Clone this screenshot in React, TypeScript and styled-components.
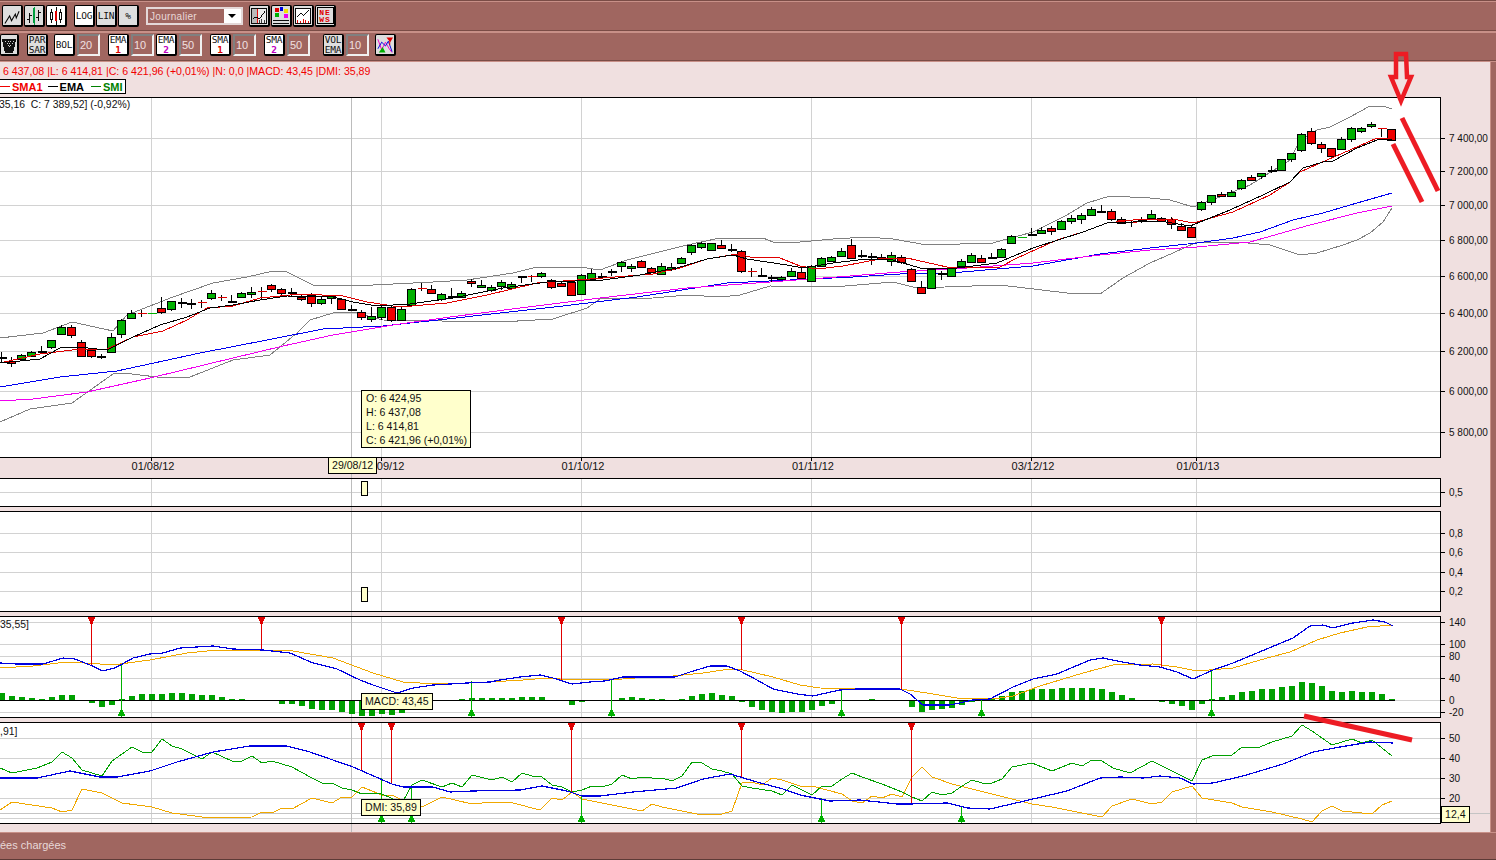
import type { ReactNode } from 'react';
import styled, { createGlobalStyle } from 'styled-components';

type Kind = 'g' | 'r' | 'b' | 'x' | 't';
type Row = [number, number, number, number, Kind];
type Pt = [number, number];

// values are read from 3x crops of the chart, so each block has its own origin
const block = (startX: number, baseY: number, rows: Row[]) =>
  rows.map((r, i) => ({
    x: startX + i * 10,
    top: Math.round(baseY + r[0] / 3) + 0.5,
    bottom: Math.round(baseY + r[1] / 3) + 0.5,
    hi: Math.round(baseY + r[2] / 3),
    lo: Math.round(baseY + r[3] / 3),
    kind: r[4],
  }));

const CANDLES = [
  ...block(1.5, 270, [
    [260, 260, 245, 275, 'b'], [272, 280, 262, 292, 'r'], [256, 268, 252, 272, 'g'], [247, 257, 243, 260, 'g'],
    [243, 243, 228, 248, 'b'], [209, 230, 209, 236, 'g'], [172, 193, 165, 195, 'g'], [170, 196, 165, 203, 'r'],
    [217, 257, 210, 262, 'r'], [240, 259, 237, 265, 'r'], [257, 262, 253, 266, 'g'], [200, 247, 190, 250, 'g'],
    [151, 193, 148, 205, 'g'], [130, 145, 120, 148, 'g'], [130, 130, 120, 140, 'x'], [130, 130, 130, 130, 't'],
    [113, 127, 82, 132, 'r'], [94, 118, 92, 122, 'g'], [95, 95, 83, 115, 'b'], [98, 103, 87, 117, 'g'],
    [97, 97, 90, 115, 'x'], [70, 85, 60, 90, 'g'], [82, 82, 75, 92, 'x'], [92, 92, 75, 100, 'b'],
    [70, 82, 65, 85, 'g'], [67, 73, 52, 85, 'g'], [63, 63, 50, 90, 'x'], [44, 58, 42, 65, 'r'],
    [58, 70, 55, 78, 'r'], [66, 66, 55, 80, 'b'], [82, 88, 75, 92, 'r'], [74, 100, 68, 110, 'r'],
    [87, 100, 82, 105, 'g'], [79, 84, 76, 102, 'g'], [88, 118, 85, 120, 'r'], [117, 117, 105, 120, 'b'],
    [127, 142, 120, 150, 'r'], [137, 148, 110, 155, 'g'], [110, 142, 105, 150, 'g'], [110, 150, 108, 155, 'r'],
    [116, 150, 110, 152, 'g'], [58, 105, 55, 108, 'g'],
  ]),
  ...block(421.5, 200, [
    [263, 263, 250, 272, 'x'], [266, 280, 255, 282, 'r'], [283, 298, 280, 302, 'g'], [288, 288, 265, 295, 'b'],
    [278, 290, 273, 295, 'g'], [244, 250, 238, 260, 'r'], [256, 262, 240, 265, 'g'], [262, 269, 255, 275, 'g'],
    [245, 257, 240, 270, 'g'], [253, 264, 247, 268, 'g'], [227, 227, 227, 248, 'b'], [229, 229, 225, 245, 'x'],
    [220, 229, 215, 235, 'g'], [239, 262, 237, 268, 'r'], [248, 259, 243, 262, 'r'], [245, 286, 243, 288, 'r'],
    [224, 283, 222, 284, 'g'], [220, 238, 208, 240, 'g'], [227, 227, 220, 235, 'b'], [212, 212, 208, 228, 'b'],
    [187, 199, 183, 215, 'g'], [199, 205, 193, 215, 'g'], [184, 202, 180, 204, 'r'], [203, 215, 200, 218, 'r'],
    [199, 223, 190, 225, 'g'], [200, 206, 190, 213, 'g'], [173, 190, 170, 193, 'g'], [134, 157, 132, 165, 'g'],
    [128, 141, 126, 146, 'g'], [130, 149, 128, 152, 'g'], [134, 144, 120, 148, 'r'], [147, 147, 132, 155, 'b'],
    [152, 214, 150, 220, 'r'], [214, 214, 205, 230, 'x'], [225, 225, 205, 228, 'b'], [231, 231, 225, 247, 'b'],
    [231, 236, 228, 240, 'g'], [212, 229, 205, 230, 'g'],
  ]),
  ...block(801.5, 180, [
    [275, 293, 265, 295, 'r'], [257, 304, 255, 305, 'g'], [233, 259, 230, 262, 'g'], [232, 242, 228, 246, 'g'],
    [212, 229, 205, 232, 'g'], [194, 234, 177, 236, 'r'], [225, 225, 210, 233, 'b'], [228, 228, 218, 254, 'b'],
    [231, 238, 222, 240, 'r'], [224, 244, 215, 258, 'g'], [230, 247, 226, 252, 'r'], [268, 304, 265, 306, 'r'],
    [322, 340, 303, 341, 'r'], [268, 323, 265, 324, 'g'], [279, 279, 272, 299, 'b'], [265, 287, 262, 290, 'g'],
    [244, 258, 238, 262, 'g'], [226, 245, 220, 247, 'g'], [233, 245, 226, 247, 'r'], [231, 231, 220, 237, 'b'],
    [206, 232, 204, 234, 'g'], [167, 188, 165, 191, 'g'], [170, 170, 155, 172, 't'], [161, 161, 143, 165, 'b'],
    [151, 160, 142, 163, 'g'], [143, 154, 138, 164, 'r'], [122, 148, 120, 150, 'g'], [115, 124, 105, 132, 'g'],
    [105, 118, 100, 132, 'g'], [88, 104, 82, 106, 'g'], [92, 97, 75, 100, 'r'], [92, 118, 88, 122, 'r'],
    [116, 128, 112, 130, 'r'], [125, 125, 120, 140, 'x'], [120, 120, 112, 128, 'b'], [103, 113, 90, 116, 'g'],
    [115, 122, 110, 126, 'r'],
  ]),
  ...block(1171.5, 40, [
    [537, 553, 532, 567, 'r'], [559, 569, 550, 571, 'r'], [562, 590, 555, 591, 'r'], [485, 508, 482, 512, 'g'],
    [466, 487, 464, 494, 'g'], [463, 469, 457, 471, 'r'], [457, 469, 450, 471, 'g'], [419, 445, 417, 450, 'g'],
    [412, 421, 405, 423, 'r'], [400, 407, 398, 416, 'g'], [390, 390, 378, 400, 'b'], [358, 391, 356, 394, 'g'],
    [340, 358, 338, 365, 'g'], [281, 331, 279, 335, 'g'], [272, 310, 265, 314, 'r'], [313, 325, 306, 338, 'r'],
    [325, 349, 323, 352, 'r'], [298, 328, 292, 330, 'g'], [265, 298, 262, 305, 'g'], [265, 274, 262, 278, 'g'],
    [253, 259, 247, 265, 'g'], [265, 265, 265, 290, 'x'], [268, 301, 266, 302, 'r'],
  ]),
];

const BOLL_UP: Pt[] = [[0, 338], [43, 333], [72, 322], [113, 331], [127, 315], [173, 297], [213, 283], [247, 277], [273, 271], [287, 272], [313, 285], [353, 286], [433, 282], [467, 280], [513, 273], [537, 267], [580, 267], [600, 270], [627, 260], [687, 245], [720, 238], [763, 238], [773, 242], [800, 242], [833, 239], [867, 237], [893, 239], [927, 245], [993, 243], [1007, 239], [1033, 232], [1067, 215], [1087, 203], [1110, 196], [1150, 198], [1170, 200], [1193, 207], [1217, 198], [1250, 185], [1290, 160], [1300, 140], [1317, 130], [1330, 127], [1350, 117], [1370, 106], [1383, 106], [1392, 109]];
const BOLL_DOWN: Pt[] = [[0, 422], [30, 409], [72, 403], [113, 374], [123, 373], [157, 377], [190, 377], [233, 360], [270, 355], [297, 333], [310, 320], [333, 313], [353, 312], [383, 320], [500, 322], [553, 319], [587, 308], [600, 299], [653, 298], [687, 295], [720, 297], [740, 295], [770, 286], [833, 287], [893, 282], [917, 288], [1000, 285], [1067, 293], [1100, 294], [1123, 278], [1150, 263], [1173, 253], [1197, 242], [1237, 242], [1270, 245], [1300, 255], [1317, 253], [1343, 245], [1357, 240], [1370, 233], [1383, 222], [1392, 208]];
const BLUE_LINE: Pt[] = [[0, 387], [60, 377], [117, 371], [200, 353], [267, 340], [323, 329], [383, 326], [447, 319], [500, 313], [563, 306], [637, 297], [727, 283], [853, 277], [900, 274], [950, 273], [1033, 266], [1100, 254], [1150, 248], [1197, 243], [1233, 238], [1260, 232], [1293, 220], [1323, 213], [1357, 203], [1392, 193]];
const PINK_LINE: Pt[] = [[0, 401], [33, 399], [87, 392], [150, 378], [233, 358], [283, 346], [333, 335], [393, 325], [450, 317], [520, 308], [600, 298], [687, 288], [770, 282], [850, 276], [900, 272], [967, 268], [1033, 263], [1100, 255], [1150, 250], [1197, 247], [1250, 242], [1310, 225], [1357, 213], [1392, 206]];
const EMA_LINE: Pt[] = [[0, 363], [40, 359], [60, 348], [78, 347], [107, 350], [133, 337], [160, 325], [187, 317], [210, 308], [233, 305], [260, 300], [287, 296], [333, 297], [353, 302], [377, 306], [410, 304], [453, 298], [503, 288], [547, 282], [603, 280], [640, 275], [677, 268], [707, 259], [733, 255], [747, 259], [787, 265], [803, 268], [833, 263], [867, 259], [893, 260], [920, 268], [957, 268], [997, 263], [1033, 248], [1083, 232], [1107, 223], [1160, 221], [1190, 226], [1230, 210], [1263, 195], [1290, 182], [1303, 168], [1323, 162], [1333, 161], [1357, 148], [1377, 140], [1392, 139]];
const SMA_LINE: Pt[] = [[0, 363], [40, 354], [80, 349], [107, 349], [133, 337], [163, 331], [187, 320], [207, 308], [233, 306], [260, 298], [300, 294], [343, 296], [367, 302], [400, 307], [447, 303], [487, 295], [537, 283], [603, 278], [653, 274], [680, 268], [707, 259], [737, 254], [750, 257], [780, 258], [800, 266], [817, 269], [843, 266], [880, 259], [907, 258], [947, 267], [1000, 267], [1017, 258], [1057, 240], [1083, 232], [1107, 223], [1133, 220], [1173, 219], [1193, 223], [1233, 212], [1270, 195], [1290, 182], [1300, 172], [1327, 160], [1350, 150], [1377, 138], [1392, 138]];

const MACD_BLUE: Pt[] = [[0, 663], [17, 664], [43, 664], [63, 658], [75, 659], [90, 665], [103, 671], [115, 668], [133, 658], [150, 654], [163, 653], [180, 648], [213, 646], [233, 649], [263, 650], [290, 653], [313, 663], [337, 669], [360, 680], [373, 685], [397, 693], [413, 688], [433, 685], [467, 683], [490, 682], [500, 680], [520, 677], [540, 675], [553, 678], [572, 684], [590, 682], [605, 681], [623, 677], [647, 677], [675, 677], [690, 672], [710, 666], [727, 666], [740, 671], [757, 680], [773, 689], [797, 694], [813, 696], [840, 690], [857, 689], [900, 689], [910, 694], [923, 705], [950, 705], [973, 700], [990, 699], [1013, 687], [1033, 679], [1057, 674], [1090, 660], [1103, 658], [1117, 661], [1140, 665], [1160, 667], [1177, 672], [1193, 679], [1213, 670], [1233, 663], [1257, 653], [1293, 638], [1310, 626], [1323, 625], [1333, 628], [1353, 623], [1373, 620], [1385, 622], [1393, 626]];
const MACD_ORANGE: Pt[] = [[0, 668], [33, 666], [67, 662], [100, 664], [120, 664], [150, 660], [187, 653], [217, 650], [267, 650], [293, 651], [333, 658], [373, 673], [403, 682], [420, 683], [467, 683], [490, 682], [523, 680], [547, 678], [573, 680], [623, 679], [647, 677], [673, 676], [703, 673], [730, 669], [743, 670], [773, 677], [800, 685], [820, 688], [857, 689], [900, 689], [927, 693], [957, 698], [993, 699], [1013, 696], [1040, 686], [1083, 673], [1113, 665], [1153, 664], [1177, 667], [1197, 671], [1233, 668], [1267, 658], [1290, 652], [1317, 640], [1340, 633], [1367, 627], [1393, 625]];
const MACD_HIST = [7, 4, 3, 2, 1, 3, 5, 5, 0, -2, -6, -4, 1, 4, 6, 6, 6, 7, 7, 6, 5, 5, 3, 1, 1, 0, 0, 0, -3, -3, -5, -8, -9, -9, -11, -13, -15, -15, -13, -14, -12, 0, 0, 0, 0, 0, 1, 2, 2, 2, 2, 2, 3, 3, 3, 0, 0, -4, -1, 0, 0, 0, 2, 3, 2, 1, 1, 0, 1, 4, 6, 7, 5, 4, -1, -6, -9, -11, -12, -11, -11, -9, -5, -3, 0, 0, 0, 1, 0, 0, 0, -6, -11, -9, -8, -7, -4, -1, 0, 1, 4, 8, 9, 11, 11, 11, 12, 12, 12, 12, 11, 8, 5, 2, 0, 0, -1, -3, -5, -9, -3, 1, 3, 5, 8, 9, 11, 11, 13, 14, 18, 17, 14, 9, 8, 9, 8, 8, 6, 1];

const DMI_BLUE: Pt[] = [[0, 778], [37, 778], [70, 771], [100, 777], [117, 777], [150, 771], [177, 762], [213, 752], [250, 746], [287, 746], [310, 752], [353, 767], [392, 784], [403, 787], [433, 787], [450, 792], [473, 791], [520, 790], [542, 786], [567, 791], [582, 796], [600, 796], [633, 792], [677, 788], [703, 779], [730, 774], [757, 782], [783, 789], [800, 795], [830, 801], [860, 800], [897, 804], [910, 804], [947, 803], [967, 808], [990, 809], [1033, 799], [1067, 791], [1100, 778], [1120, 777], [1143, 778], [1160, 776], [1180, 778], [1193, 784], [1213, 783], [1243, 776], [1283, 764], [1313, 752], [1340, 747], [1370, 742], [1393, 743]];
const DMI_GREEN: Pt[] = [[0, 768], [12, 773], [37, 768], [52, 762], [62, 752], [72, 758], [82, 770], [102, 776], [112, 761], [132, 747], [142, 752], [152, 752], [162, 739], [172, 746], [182, 749], [202, 759], [212, 752], [232, 761], [242, 761], [252, 756], [262, 763], [272, 761], [292, 767], [312, 778], [322, 783], [332, 783], [342, 788], [352, 790], [362, 794], [372, 793], [382, 794], [402, 803], [412, 785], [422, 780], [442, 787], [452, 783], [462, 787], [472, 775], [492, 780], [502, 777], [512, 782], [522, 773], [532, 776], [542, 777], [552, 785], [562, 787], [572, 792], [582, 790], [592, 786], [602, 787], [612, 784], [622, 775], [632, 779], [642, 777], [652, 778], [662, 778], [672, 781], [682, 776], [692, 762], [702, 763], [712, 769], [722, 771], [732, 774], [742, 786], [752, 788], [772, 791], [782, 795], [792, 785], [800, 789], [812, 795], [822, 786], [832, 786], [842, 779], [852, 773], [862, 777], [882, 784], [902, 792], [912, 797], [922, 801], [932, 792], [942, 795], [952, 793], [962, 786], [972, 780], [982, 783], [992, 783], [1002, 779], [1012, 767], [1032, 763], [1052, 771], [1072, 763], [1082, 766], [1092, 760], [1102, 761], [1113, 768], [1130, 773], [1152, 761], [1192, 781], [1202, 760], [1212, 756], [1232, 755], [1242, 747], [1260, 747], [1272, 742], [1292, 736], [1302, 725], [1312, 731], [1332, 745], [1352, 739], [1362, 743], [1372, 740], [1392, 756]];
const DMI_ORANGE: Pt[] = [[0, 810], [12, 802], [32, 805], [52, 808], [62, 812], [72, 810], [82, 789], [102, 793], [122, 803], [152, 807], [172, 813], [202, 817], [212, 818], [252, 817], [262, 812], [272, 813], [282, 808], [292, 809], [312, 798], [332, 803], [342, 797], [352, 797], [362, 787], [382, 795], [392, 795], [402, 800], [422, 807], [442, 797], [472, 804], [492, 802], [513, 803], [540, 810], [552, 798], [562, 800], [572, 792], [582, 799], [602, 803], [642, 811], [652, 804], [662, 807], [692, 813], [702, 815], [722, 814], [732, 811], [742, 783], [752, 782], [762, 785], [772, 778], [782, 780], [800, 786], [812, 786], [842, 794], [852, 801], [862, 803], [872, 796], [882, 798], [892, 794], [902, 797], [912, 777], [922, 767], [932, 777], [952, 784], [992, 794], [1032, 804], [1052, 807], [1082, 813], [1102, 817], [1112, 806], [1132, 799], [1152, 804], [1162, 802], [1172, 792], [1192, 786], [1202, 798], [1232, 803], [1242, 807], [1272, 812], [1302, 819], [1312, 822], [1322, 811], [1332, 806], [1342, 811], [1372, 814], [1382, 805], [1392, 801]];

const VERTICALS = [151.5, 351.5, 381.5, 581.5, 811.5, 1031.5, 1196.5];
const DATES: [number, string][] = [[153, '01/08/12'], [383, '03/09/12'], [583, '01/10/12'], [813, '01/11/12'], [1033, '03/12/12'], [1198, '01/01/13']];
const MAIN_AXIS: [number, string][] = [[138, '7 400,00'], [171, '7 200,00'], [205, '7 000,00'], [240, '6 800,00'], [276, '6 600,00'], [313, '6 400,00'], [351, '6 200,00'], [391, '6 000,00'], [432, '5 800,00']];
const VOL_AXIS: [number, string][] = [[492, '0,5']];
const OSC_AXIS: [number, string][] = [[533, '0,8'], [552, '0,6'], [572, '0,4'], [591, '0,2']];
const MACD_AXIS: [number, string][] = [[622, '140'], [644, '100'], [656, '80'], [678, '40'], [700, '0'], [712, '-20']];
const DMI_AXIS: [number, string][] = [[738, '50'], [758, '40'], [778, '30'], [798, '20'], [818, '10']];

const MACD_SELL: Pt[] = [[91.5, 665], [261.5, 650], [561.5, 680], [741.5, 670], [901.5, 689], [1161.5, 667]];
const MACD_BUY: Pt[] = [[121.5, 665], [471.5, 681], [611.5, 679], [841.5, 689], [981.5, 699], [1211.5, 670]];
const DMI_SELL: Pt[] = [[361.5, 771], [391.5, 784], [571.5, 792], [741.5, 777], [911.5, 804]];
const DMI_BUY: Pt[] = [[381.5, 778], [411.5, 785], [581.5, 796], [821.5, 798], [961.5, 806]];

const points = (pts: Pt[]) => pts.map(p => p.join(',')).join(' ');

const Series = ({ pts, color, width = 1 }: { pts: Pt[]; color: string; width?: number }) => (
  <polyline points={points(pts)} fill="none" stroke={color} strokeWidth={width} />
);

const Candle = ({ c }: { c: (typeof CANDLES)[number] }) => {
  const wick = <line x1={c.x} x2={c.x} y1={c.hi} y2={c.lo} stroke="#000" />;
  if (c.kind === 'x' || c.kind === 't') {
    return (
      <g>
        {c.kind === 'x' && wick}
        <line x1={c.x - 4} x2={c.x + 5} y1={c.top} y2={c.top} stroke={c.kind === 'x' ? '#e00000' : '#00b000'} />
      </g>
    );
  }
  if (c.kind === 'b') {
    return (
      <g>
        {wick}
        <rect x={c.x - 4} y={c.top - 1} width={9} height={2} fill="#000" />
      </g>
    );
  }
  return (
    <g>
      {wick}
      <rect
        x={c.x - 4}
        y={c.top}
        width={8}
        height={Math.max(c.bottom - c.top, 1)}
        fill={c.kind === 'g' ? '#00b000' : '#f00000'}
        stroke="#000"
      />
    </g>
  );
};

const Panel = ({
  top,
  bottom,
  height,
  axis,
  children,
}: {
  top: number;
  bottom: number;
  height: number;
  axis: [number, string][];
  children?: ReactNode;
}) => (
  <PanelSvg width={1491} height={height} viewBox={`0 ${top} 1491 ${height}`} shapeRendering="crispEdges">
    <rect x={0} y={top} width={1441} height={bottom - top} fill="#fff" />
    {axis.map(([y]) => (
      <line key={y} x1={0} x2={1441} y1={y + 0.5} y2={y + 0.5} stroke="#d2d2d2" />
    ))}
    {VERTICALS.map(x => (
      <line key={x} x1={x} x2={x} y1={top} y2={bottom} stroke={x === 351.5 ? '#bcbcbc' : '#d2d2d2'} />
    ))}
    {children}
    <polyline
      points={`0,${top + 0.5} 1440.5,${top + 0.5} 1440.5,${bottom - 0.5} 0,${bottom - 0.5}`}
      fill="none"
      stroke="#000"
    />
    {axis.map(([y, label]) => (
      <g key={label}>
        <line x1={1441} x2={1445} y1={y + 0.5} y2={y + 0.5} stroke="#000" />
        <AxisLabel x={1449} y={y + 4}>
          {label}
        </AxisLabel>
      </g>
    ))}
  </PanelSvg>
);

const Signals = ({ top, bottom, sell, buy }: { top: number; bottom: number; sell: Pt[]; buy: Pt[] }) => (
  <g>
    {sell.map(([x, y]) => (
      <g key={x}>
        <line x1={x} x2={x} y1={top} y2={y} stroke="#e00000" />
        <polygon points={`${x - 4},${top} ${x + 4},${top} ${x + 1.5},${top + 5} ${x + 1.5},${top + 7} ${x - 1.5},${top + 7} ${x - 1.5},${top + 5}`} fill="#e00000" />
      </g>
    ))}
    {buy.map(([x, y]) => (
      <g key={x}>
        <line x1={x} x2={x} y1={y} y2={bottom} stroke="#00b000" />
        <polygon points={`${x - 4},${bottom - 1} ${x + 4},${bottom - 1} ${x + 1},${bottom - 7} ${x - 1},${bottom - 7}`} fill="#00b000" />
      </g>
    ))}
  </g>
);

const MarkerBox = ({ y }: { y: number }) => (
  <rect x={361.5} y={y} width={6} height={14} fill="#ffffcc" stroke="#000" />
);

const LineChartIcon = () => (
  <svg width="19" height="20" viewBox="0 0 19 20">
    <polyline points="2,18 7,10 9,15 13,8 14,12 17,5" fill="none" stroke="#000" strokeWidth="1.1" />
  </svg>
);

const BarsIcon = () => (
  <svg width="19" height="20" viewBox="0 0 19 20" shapeRendering="crispEdges">
    <path d="M4.5 7v10M2 14h2.5M4.5 9H7M14.5 4v11M12 12h2.5M14.5 6H17" stroke="#000" fill="none" />
    <rect x="8" y="2" width="3" height="15" fill="#00a040" />
    <line x1="9.5" x2="9.5" y1="1" y2="19" stroke="#00a040" />
  </svg>
);

const CandlesIcon = () => (
  <svg width="19" height="20" viewBox="0 0 19 20" shapeRendering="crispEdges">
    <path d="M4.5 3v14M9.5 1v18M14.5 3v14" stroke="#000" />
    <rect x="3.5" y="6.5" width="2" height="7" fill="#fff" stroke="#000" />
    <rect x="8" y="5" width="3" height="10" fill="#e00000" />
    <rect x="13.5" y="6.5" width="2" height="7" fill="#fff" stroke="#000" />
  </svg>
);

const TrashIcon = () => (
  <svg width="17" height="20" viewBox="0 0 17 20" shapeRendering="crispEdges">
    <polygon points="1,4 16,4 13,18 4,18" fill="#111" />
    <path d="M4 6h1M7 6h1M10 6h1M13 6h1M6 8h1M9 8h1M12 8h1M7 10h1M10 10h1M9 12h1" stroke="#ddd" />
  </svg>
);

const IndicatorsIcon = () => (
  <svg width="19" height="20" viewBox="0 0 19 20" shapeRendering="crispEdges">
    <rect x="1.5" y="2.5" width="16" height="15" fill="#eee" stroke="#000" />
    <rect x="2" y="3" width="5" height="14" fill="#bbb" />
    <line x1="7.5" x2="7.5" y1="3" y2="17" stroke="#e00000" />
    <polyline points="3,13 7,11 10,13 16,5" fill="none" stroke="#000" />
    <path d="M9.5 14v3M12.5 13v4M15.5 14v3" stroke="#333" />
  </svg>
);

const ColorsIcon = () => (
  <svg width="19" height="20" viewBox="0 0 19 20" shapeRendering="crispEdges">
    <rect x="3" y="2" width="4" height="4" fill="#e00000" />
    <rect x="8" y="1" width="4" height="4" fill="#0000e0" />
    <rect x="13" y="3" width="4" height="4" fill="#f0e000" />
    <rect x="3" y="7" width="4" height="4" fill="#00b000" />
    <rect x="13" y="8" width="4" height="4" fill="#f000f0" />
    <path d="M1 14.5h17M1 17.5h17" stroke="#000" />
  </svg>
);

const ChartBarsIcon = () => (
  <svg width="19" height="20" viewBox="0 0 19 20" shapeRendering="crispEdges">
    <rect x="1.5" y="2.5" width="16" height="15" fill="#fff" stroke="#000" />
    <polyline points="3,11 7,7 10,9 16,4" fill="none" stroke="#000" />
    <path d="M3.5 14v3M6.5 15v2M9.5 13v4M12.5 14v3M15.5 15v2" stroke="#e00000" />
  </svg>
);

const NewsIcon = () => (
  <NewsFrame>
    <span>NE</span>
    <span>WS</span>
  </NewsFrame>
);

const SignalsIcon = () => (
  <svg width="19" height="20" viewBox="0 0 19 20">
    <polyline points="2,4 6,15 10,7 14,14 17,18" fill="none" stroke="#f000c0" />
    <polyline points="2,14 6,7 10,11 13,6 17,17" fill="none" stroke="#0000e0" />
    <polygon points="11,2 18,2 15,7" fill="#e00000" />
    <rect x="14" y="6" width="1" height="4" fill="#e00000" />
    <polygon points="3,18 10,18 7,12" fill="#00b000" />
  </svg>
);

const App = () => {
  return (
    <>
      <GlobalStyle />
      <Root>
        <Toolbar $height={30} $pad={5}>
          <Group $ml={2}>
            <ToolButton><LineChartIcon /></ToolButton>
            <ToolButton><BarsIcon /></ToolButton>
            <ToolButton $on><CandlesIcon /></ToolButton>
          </Group>
          <Group $ml={7}>
            <ToolButton $on>LOG</ToolButton>
            <ToolButton>LIN</ToolButton>
            <ToolButton>%</ToolButton>
          </Group>
          <PeriodSelect>
            <PeriodText>Journalier</PeriodText>
            <PeriodArrow />
          </PeriodSelect>
          <Group $ml={6}>
            <ToolButton><IndicatorsIcon /></ToolButton>
            <ToolButton><ColorsIcon /></ToolButton>
            <ToolButton><ChartBarsIcon /></ToolButton>
            <ToolButton><NewsIcon /></ToolButton>
          </Group>
        </Toolbar>
        <Toolbar $height={29} $pad={3}>
          <Group $ml={0}>
            <ToolButton $w={19}><TrashIcon /></ToolButton>
          </Group>
          <Group $ml={8}>
            <ToolButton>PAR<br />SAR</ToolButton>
          </Group>
          <Group $ml={6}>
            <ToolButton $on>BOL</ToolButton>
            <PeriodInput>20</PeriodInput>
          </Group>
          <Group $ml={8}>
            <ToolButton $on>EMA<Sub $color="#e00000">1</Sub></ToolButton>
            <PeriodInput>10</PeriodInput>
          </Group>
          <Group $ml={2}>
            <ToolButton $on>EMA<Sub $color="#c000c0">2</Sub></ToolButton>
            <PeriodInput>50</PeriodInput>
          </Group>
          <Group $ml={8}>
            <ToolButton $on>SMA<Sub $color="#e00000">1</Sub></ToolButton>
            <PeriodInput>10</PeriodInput>
          </Group>
          <Group $ml={8}>
            <ToolButton $on>SMA<Sub $color="#c000c0">2</Sub></ToolButton>
            <PeriodInput>50</PeriodInput>
          </Group>
          <Group $ml={13}>
            <ToolButton>VOL<br />EMA</ToolButton>
            <PeriodInput>10</PeriodInput>
          </Group>
          <Group $ml={6}>
            <ToolButton><SignalsIcon /></ToolButton>
          </Group>
        </Toolbar>

        <Workspace>
          <InfoLine>6 437,08 |L: 6 414,81 |C: 6 421,96 (+0,01%) |N: 0,0 |MACD: 43,45 |DMI: 35,89</InfoLine>
          <Legend>
            <LegendItem $color="#f00000">SMA1</LegendItem>
            <LegendItem $color="#000">EMA</LegendItem>
            <LegendItem $color="#008000">SMI</LegendItem>
          </Legend>
          <Crosshair />
          <PanelStack>
            <Panel top={97} bottom={458} height={377} axis={MAIN_AXIS}>
              <PanelCaption x={-1} y={108}>35,16  C: 7 389,52] (-0,92%)</PanelCaption>
              <Series pts={BOLL_UP} color="#808080" />
              <Series pts={BOLL_DOWN} color="#808080" />
              <Series pts={BLUE_LINE} color="#0000f0" />
              <Series pts={PINK_LINE} color="#f000f0" />
              {CANDLES.map(c => (
                <Candle key={c.x} c={c} />
              ))}
              <Series pts={SMA_LINE} color="#e00000" />
              <Series pts={EMA_LINE} color="#000" />
              {DATES.map(([x, label]) => (
                <g key={label}>
                  <line x1={x - 1.5} x2={x - 1.5} y1={458} y2={461} stroke="#000" />
                  <DateLabel x={x} y={470}>{label}</DateLabel>
                </g>
              ))}
            </Panel>
            <Panel top={478} bottom={507} height={29} axis={VOL_AXIS}>
              <MarkerBox y={481.5} />
            </Panel>
            <Panel top={511} bottom={612} height={101} axis={OSC_AXIS}>
              <MarkerBox y={587.5} />
            </Panel>
            <Panel top={616} bottom={718} height={102} axis={MACD_AXIS}>
              <PanelCaption x={0} y={628}>35,55]</PanelCaption>
              {MACD_HIST.map((v, i) =>
                v === 0 ? null : (
                  <rect
                    key={i}
                    x={-1 + i * 10}
                    y={v > 0 ? 700 - v : 701}
                    width={6}
                    height={Math.abs(v)}
                    fill="#00a000"
                  />
                ),
              )}
              <line x1={0} x2={1395} y1={700.5} y2={700.5} stroke="#000" />
              <Series pts={MACD_ORANGE} color="#f0a800" />
              <Signals top={617} bottom={717} sell={MACD_SELL} buy={MACD_BUY} />
              <Series pts={MACD_BLUE} color="#0000e0" width={1.2} />
            </Panel>
            <Panel top={722} bottom={824} height={102} axis={DMI_AXIS}>
              <PanelCaption x={0} y={735}>,91]</PanelCaption>
              <line x1={0} x2={1490} y1={813.5} y2={813.5} stroke="#c4c4c4" />
              <Series pts={DMI_ORANGE} color="#f0a800" />
              <Series pts={DMI_GREEN} color="#00a000" />
              <Signals top={723} bottom={823} sell={DMI_SELL} buy={DMI_BUY} />
              <Series pts={DMI_BLUE} color="#0000e0" width={1.2} />
            </Panel>
          </PanelStack>
        </Workspace>

        <StatusBar>ées chargées</StatusBar>

        <Tip $x={361} $y={390} $multi>
          <div>O: 6 424,95</div>
          <div>H: 6 437,08</div>
          <div>L: 6 414,81</div>
          <div>C: 6 421,96 (+0,01%)</div>
        </Tip>
        <Tip $x={328} $y={457}>29/08/12</Tip>
        <Tip $x={361} $y={693}>MACD: 43,45</Tip>
        <Tip $x={361} $y={799}>DMI: 35,89</Tip>
        <Tip $x={1441} $y={806}>12,4</Tip>

        <Annotations viewBox="0 0 1496 860" width={1496} height={860}>
          <polygon
            points="1396,54 1406,54 1407,77 1411,77 1401,101 1391,77 1396,77"
            fill="none"
            stroke="#ed1c24"
            strokeWidth={4.5}
          />
          <line x1={1402} y1={118} x2={1438} y2={191} stroke="#ed1c24" strokeWidth={5} />
          <line x1={1393} y1={144} x2={1422} y2={202} stroke="#ed1c24" strokeWidth={5} />
          <line x1={1304} y1={716} x2={1412} y2={740} stroke="#ed1c24" strokeWidth={5} />
        </Annotations>
      </Root>
    </>
  );
};

export default App;

const GlobalStyle = createGlobalStyle`
  html, body {
    margin: 0;
    padding: 0;
    background: #a06660;
    overflow: hidden;
  }
  body {
    font-family: 'Liberation Sans', Arial, sans-serif;
  }
`;

const Root = styled.div`
  position: relative;
  width: 1496px;
  height: 860px;
  overflow: hidden;
  display: flex;
  flex-direction: column;
  background: #a06660;
  border-top: 1px solid #7a4c46;
  box-sizing: border-box;
`;

const Toolbar = styled.div<{ $height: number; $pad: number }>`
  box-sizing: border-box;
  height: ${p => p.$height}px;
  padding-top: ${p => p.$pad - 1}px;
  display: flex;
  align-items: flex-start;
  border-bottom: 1px solid #7a4c46;
  box-shadow: inset 0 1px 0 #c89088, 0 1px 0 #c89088;
  margin-bottom: 1px;
`;

const Group = styled.div<{ $ml: number }>`
  display: flex;
  gap: 1px;
  margin-left: ${p => p.$ml}px;
`;

const ToolButton = styled.div<{ $on?: boolean; $w?: number }>`
  box-sizing: border-box;
  width: ${p => p.$w ?? 21}px;
  height: 22px;
  display: flex;
  flex-wrap: wrap;
  align-content: center;
  align-items: center;
  justify-content: center;
  text-align: center;
  background: ${p => (p.$on ? '#fff' : '#dedede')};
  border: 1px solid #000;
  border-right-width: 2px;
  border-bottom-width: 2px;
  border-radius: 2px;
  font-family: 'DejaVu Sans Mono', 'Liberation Mono', monospace;
  font-size: 9.5px;
  letter-spacing: -0.3px;
  line-height: 10px;
  color: #111;
`;

const Sub = styled.span<{ $color: string }>`
  display: block;
  width: 100%;
  font-weight: 700;
  color: ${p => p.$color};
`;

const NewsFrame = styled.div`
  width: 17px;
  height: 17px;
  border: 1px solid #000;
  box-sizing: border-box;
  display: flex;
  flex-direction: column;
  align-items: center;
  justify-content: center;
  font-family: 'Liberation Mono', monospace;
  font-size: 8px;
  line-height: 7px;
  font-weight: 700;
  color: #e00000;
  span {
    letter-spacing: 1px;
  }
`;

const PeriodInput = styled.div`
  box-sizing: border-box;
  width: 23px;
  height: 22px;
  margin-left: 1px;
  padding-left: 1px;
  display: flex;
  align-items: center;
  border: 2px solid;
  border-color: #808080 #f0f0f0 #f0f0f0 #808080;
  background: #a06660;
  color: #f0e0e0;
  font-size: 11px;
`;

const PeriodSelect = styled.div`
  box-sizing: border-box;
  width: 97px;
  height: 18px;
  margin: 2px 0 0 7px;
  display: flex;
  align-items: center;
  justify-content: space-between;
  border: 2px solid #e4d8d8;
  background: #a06660;
`;

const PeriodText = styled.span`
  padding-left: 2px;
  color: #e8d8d8;
  font-size: 10px;
  letter-spacing: 0.3px;
`;

const PeriodArrow = styled.span`
  position: relative;
  width: 17px;
  height: 100%;
  background: #fff;
  &::after {
    content: '';
    position: absolute;
    left: 4px;
    top: 5px;
    border-left: 4px solid transparent;
    border-right: 4px solid transparent;
    border-top: 4px solid #000;
  }
`;

const Workspace = styled.div`
  position: relative;
  box-sizing: border-box;
  width: 1491px;
  height: 770px;
  background: #f0e0e0;
  border-right: 1px solid #c89088;
`;

const InfoLine = styled.div`
  height: 17px;
  padding: 3px 0 0 3px;
  box-sizing: border-box;
  color: #f00000;
  font-size: 10.6px;
  line-height: 13px;
  white-space: nowrap;
`;

const Legend = styled.div`
  box-sizing: border-box;
  width: 127px;
  height: 15px;
  margin-left: -1px;
  display: flex;
  align-items: center;
  gap: 5px;
  background: #fff;
  border: 1px solid #000;
`;

const LegendItem = styled.span<{ $color: string }>`
  display: flex;
  align-items: center;
  color: ${p => p.$color};
  font-size: 11px;
  font-weight: 700;
  &::before {
    content: '';
    width: 10px;
    height: 1px;
    margin-right: 2px;
    background: ${p => p.$color};
  }
  &:last-child {
    margin-left: 2px;
  }
`;

const Crosshair = styled.div`
  position: absolute;
  left: 351px;
  top: 36px;
  bottom: 0;
  width: 1px;
  background: #bcbcbc;
`;

const PanelStack = styled.div`
  position: relative;
  margin-top: 3px;
  display: flex;
  flex-direction: column;
  gap: 4px;
`;

const PanelSvg = styled.svg`
  display: block;
`;

const AxisLabel = styled.text`
  font-family: 'Liberation Sans', Arial, sans-serif;
  font-size: 10px;
  fill: #111;
`;

const DateLabel = styled.text`
  font-family: 'Liberation Sans', Arial, sans-serif;
  font-size: 11px;
  fill: #111;
  text-anchor: middle;
`;

const PanelCaption = styled.text`
  font-family: 'Liberation Sans', Arial, sans-serif;
  font-size: 10.4px;
  fill: #111;
  white-space: pre;
`;

const StatusBar = styled.div`
  flex: 1;
  display: flex;
  align-items: center;
  padding-bottom: 3px;
  border-top: 1px solid #c89088;
  border-bottom: 1px solid #5c3a36;
  color: #e8d8d8;
  font-size: 11px;
`;

const Tip = styled.div<{ $x: number; $y: number; $multi?: boolean }>`
  position: absolute;
  left: ${p => p.$x}px;
  top: ${p => p.$y - 1}px;
  box-sizing: border-box;
  padding: ${p => (p.$multi ? '0 3px 0 4px' : '1px 3px')};
  background: #ffffcc;
  border: 1px solid #000;
  color: #111;
  font-size: 10.6px;
  line-height: ${p => (p.$multi ? '14px' : '13px')};
  white-space: nowrap;
`;

const Annotations = styled.svg`
  position: absolute;
  left: 0;
  top: -1px;
  pointer-events: none;
`;
